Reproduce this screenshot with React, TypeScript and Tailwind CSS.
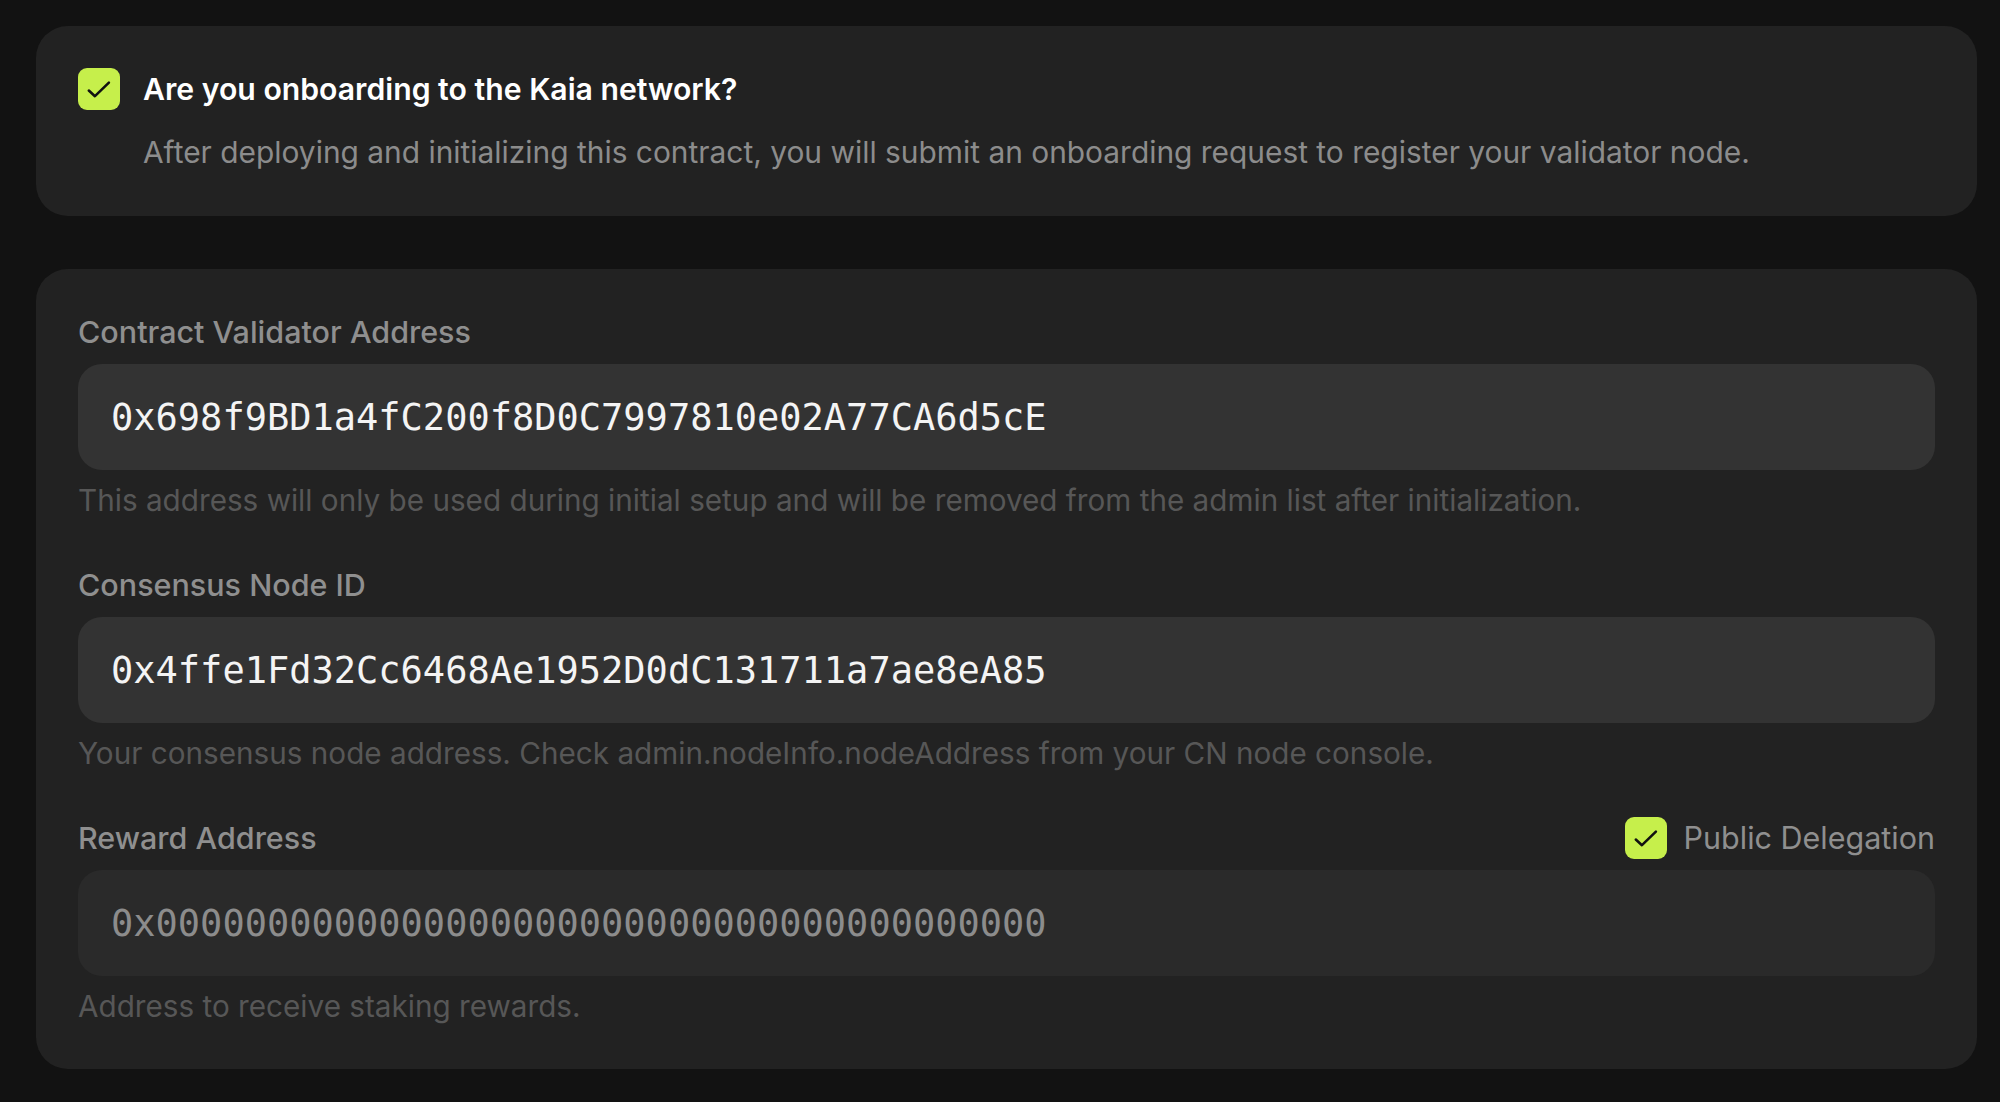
import React from "react";

const sans = { fontFamily: "Inter, 'Noto Sans', sans-serif" };

function Check({ className = "" }: { className?: string }) {
  return (
    <span
      className={`flex h-[42px] w-[42px] shrink-0 items-center justify-center rounded-[9px] bg-[#c6ef4b] ${className}`}
    >
      <svg viewBox="0 0 24 24" className="h-[36px] w-[36px]" fill="none">
        <path
          d="M5.2 13 9.3 16.8 18.6 7.8"
          stroke="#111"
          strokeWidth="1.7"
          strokeLinecap="round"
          strokeLinejoin="round"
        />
      </svg>
    </span>
  );
}

type FieldProps = {
  label: string;
  value: string;
  hint: string;
  muted?: boolean;
  extra?: React.ReactNode;
  first?: boolean;
};

function Field({ label, value, hint, muted, extra, first }: FieldProps) {
  return (
    <div className={first ? "" : "mt-[45px]"}>
      <div className="flex h-[40px] items-center justify-between">
        <span className="text-[30.5px] font-medium leading-[40px] text-[#8f8f8f]">{label}</span>
        {extra}
      </div>
      <div
        className={`mt-[12px] flex h-[106px] items-center rounded-[24px] pl-[33px] ${
          muted ? "bg-[#2a2a2a] text-[#8c8c8c]" : "bg-[#333333] text-[#f4f4f4]"
        }`}
      >
        <span
          className="text-[37px] leading-none"
          style={{ fontFamily: "'DejaVu Sans Mono', 'Liberation Mono', monospace" }}
        >
          {value}
        </span>
      </div>
      <p className="mt-[10px] text-[29.7px] leading-[40px] text-[#575757]">{hint}</p>
    </div>
  );
}

export default function App() {
  return (
    <div className="min-h-screen bg-[#121212] pb-[33px] pl-[36px] pr-[23px] pt-[26px]" style={sans}>
      <section className="rounded-[32px] bg-[#222222] px-[42px] pb-[44px] pt-[42px]">
        <div className="flex items-center gap-[23px]">
          <Check />
          <h2 className="text-[30.2px] font-semibold leading-[42px] text-white">
            Are you onboarding to the Kaia network?
          </h2>
        </div>
        <p className="mt-[22px] pl-[65px] text-[29.9px] leading-[40px] text-[#8c8c8c]">
          After deploying and initializing this contract, you will submit an onboarding request to register your
          validator node.
        </p>
      </section>

      <section className="mt-[53px] rounded-[32px] bg-[#222222] px-[42px] pb-[43px] pt-[43px]">
        <Field
          first
          label="Contract Validator Address"
          value="0x698f9BD1a4fC200f8D0C7997810e02A77CA6d5cE"
          hint="This address will only be used during initial setup and will be removed from the admin list after initialization."
        />
        <Field
          label="Consensus Node ID"
          value="0x4ffe1Fd32Cc6468Ae1952D0dC131711a7ae8eA85"
          hint="Your consensus node address. Check admin.nodeInfo.nodeAddress from your CN node console."
        />
        <Field
          muted
          label="Reward Address"
          value="0x0000000000000000000000000000000000000000"
          hint="Address to receive staking rewards."
          extra={
            <label className="flex items-center gap-[17px]">
              <Check />
              <span className="text-[30.5px] leading-[40px] text-[#8f8f8f]">Public Delegation</span>
            </label>
          }
        />
      </section>
    </div>
  );
}
